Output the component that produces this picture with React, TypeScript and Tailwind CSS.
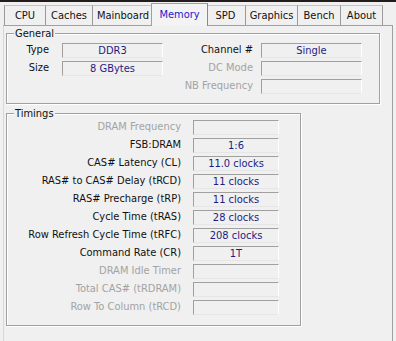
import React from "react";

const fieldCls =
  "h-[15px] border border-t-[#a0a0a0] border-l-[#a0a0a0] border-b-[#e6e6e6] border-r-[#ffffff] bg-[#f0f0f0] text-[#1c1c84] text-center leading-[13px] whitespace-nowrap";

function Field({ w, children }: { w: string; children?: React.ReactNode }) {
  return <div className={`${fieldCls} ${w}`}>{children}</div>;
}

function Tab({
  label,
  w,
  first,
  selected,
}: {
  label: string;
  w: string;
  first?: boolean;
  selected?: boolean;
}) {
  if (selected) {
    return (
      <div
        className={`relative z-10 -ml-[3px] -mr-[2px] -mb-[1px] h-[23px] ${w} border-t border-l border-r border-t-[#a0a0a0] border-l-[#a0a0a0] border-r-[#8a8a8a] bg-[#f3f3f3] text-[#1a1ad0] flex justify-center pt-[4px] leading-[13px]`}
      >
        {label}
      </div>
    );
  }
  return (
    <div
      className={`h-[20px] ${w} ${first ? "" : "-ml-[1px]"} border-t border-l border-r border-t-[#c4c4c4] border-l-[#9a9a9a] border-r-[#9a9a9a] bg-[#f0f0f0] flex justify-center pt-[3px] leading-[13px]`}
    >
      {label}
    </div>
  );
}

function Group({
  title,
  cls,
  children,
}: {
  title: string;
  cls: string;
  children: React.ReactNode;
}) {
  return (
    <div
      className={`relative border border-[#a0a0a0] shadow-[inset_1px_1px_0_#ffffff,1px_1px_0_#ffffff] ${cls}`}
    >
      <span className="absolute -top-[7px] left-[7px] bg-[#f0f0f0] px-[1px] leading-[13px]">
        {title}
      </span>
      {children}
    </div>
  );
}

const timings: { label: string; value?: string; disabled?: boolean }[] = [
  { label: "DRAM Frequency", disabled: true },
  { label: "FSB:DRAM", value: "1:6" },
  { label: "CAS# Latency (CL)", value: "11.0 clocks" },
  { label: "RAS# to CAS# Delay (tRCD)", value: "11 clocks" },
  { label: "RAS# Precharge (tRP)", value: "11 clocks" },
  { label: "Cycle Time (tRAS)", value: "28 clocks" },
  { label: "Row Refresh Cycle Time (tRFC)", value: "208 clocks" },
  { label: "Command Rate (CR)", value: "1T" },
  { label: "DRAM Idle Timer", disabled: true },
  { label: "Total CAS# (tRDRAM)", disabled: true },
  { label: "Row To Column (tRCD)", disabled: true },
];

export default function App() {
  return (
    <div className="w-[396px] h-[341px] overflow-hidden bg-[#f0f0f0] flex flex-col text-[11px] text-[#111111] font-['DejaVu_Sans_Condensed','Liberation_Sans',Arial,sans-serif]">
      <div className="h-[2px] bg-[#221c1c]" />
      <div className="h-[23px] flex items-end pl-[4px]">
        <Tab label="CPU" w="w-[42px]" first />
        <Tab label="Caches" w="w-[48px]" />
        <Tab label="Mainboard" w="w-[62px]" />
        <Tab label="Memory" w="w-[57px]" selected />
        <Tab label="SPD" w="w-[41px]" />
        <Tab label="Graphics" w="w-[53px]" />
        <Tab label="Bench" w="w-[44px]" />
        <Tab label="About" w="w-[43px]" />
      </div>
      <div className="flex-1 ml-[3px] w-[390px] border-t border-l border-r border-t-[#a0a0a0] border-l-[#d8d8d8] border-r-[#a0a0a0] pl-[2px] pt-[7px] flex flex-col">
        <Group title="General" cls="w-[374px] h-[71px] pt-[9px]">
          <div className="flex flex-col gap-[3px]">
            <div className="flex items-center h-[15px]">
              <div className="w-[42px] text-right">Type</div>
              <div className="ml-[13px]">
                <Field w="w-[101px]">DDR3</Field>
              </div>
              <div className="w-[90px] text-right">Channel #</div>
              <div className="ml-[8px]">
                <Field w="w-[101px]">Single</Field>
              </div>
            </div>
            <div className="flex items-center h-[15px]">
              <div className="w-[42px] text-right">Size</div>
              <div className="ml-[13px]">
                <Field w="w-[101px]">8 GBytes</Field>
              </div>
              <div className="w-[90px] text-right text-[#a3a3a3]">DC Mode</div>
              <div className="ml-[8px]">
                <Field w="w-[101px]" />
              </div>
            </div>
            <div className="flex items-center h-[15px]">
              <div className="w-[156px]" />
              <div className="w-[90px] text-right text-[#a3a3a3] whitespace-nowrap">
                NB Frequency
              </div>
              <div className="ml-[8px]">
                <Field w="w-[101px]" />
              </div>
            </div>
          </div>
        </Group>
        <Group title="Timings" cls="mt-[9px] w-[295px] h-[213px] pt-[6px]">
          <div className="flex flex-col gap-[3px]">
            {timings.map((t) => (
              <div key={t.label} className="flex items-center h-[15px]">
                <div
                  className={`w-[174px] text-right whitespace-nowrap ${
                    t.disabled ? "text-[#a3a3a3]" : ""
                  }`}
                >
                  {t.label}
                </div>
                <div className="ml-[12px]">
                  <Field w="w-[86px]">{t.value}</Field>
                </div>
              </div>
            ))}
          </div>
        </Group>
      </div>
    </div>
  );
}
